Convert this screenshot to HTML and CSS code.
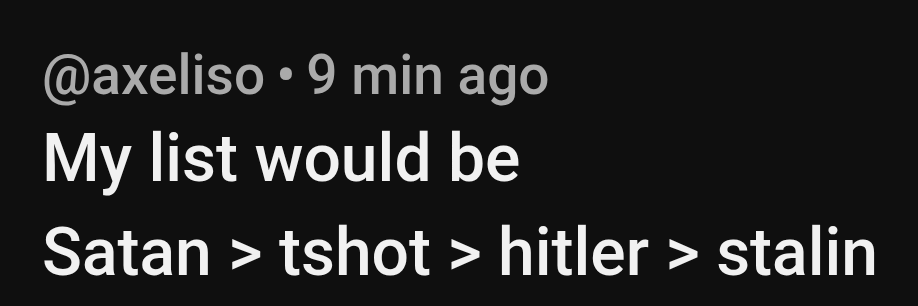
FILE: index.html
```html
<!DOCTYPE html>
<html lang="en">
<head>
    <meta charset="UTF-8">
    <title>Comment</title>
    <link rel="stylesheet" href="styles.css">
</head>
<body>
    <div class="comment">
        <div class="meta">
            <span class="author">@axeliso</span>
            <span class="dot">&bull;</span>
            <span class="time">9 min ago</span>
        </div>
        <p class="text">My list would be<br>Satan &gt; tshot &gt; hitler &gt; stalin</p>
    </div>
</body>
</html>
```

FILE: styles.css
```css
body {
    margin: 0;
    background-color: #0f0f0f;
    font-family: Roboto, "Liberation Sans", sans-serif;
}
.comment {
    padding: 43px 0 0 42px;
}
.meta {
    color: #aaaaaa;
    font-size: 55px;
    font-weight: 500;
    line-height: 64px;
    display: flex;
    gap: 11px;
}
.text {
    margin: 5px 0 0;
    color: #f1f1f1;
    font-size: 66px;
    font-weight: 500;
    line-height: 94px;
}
```
